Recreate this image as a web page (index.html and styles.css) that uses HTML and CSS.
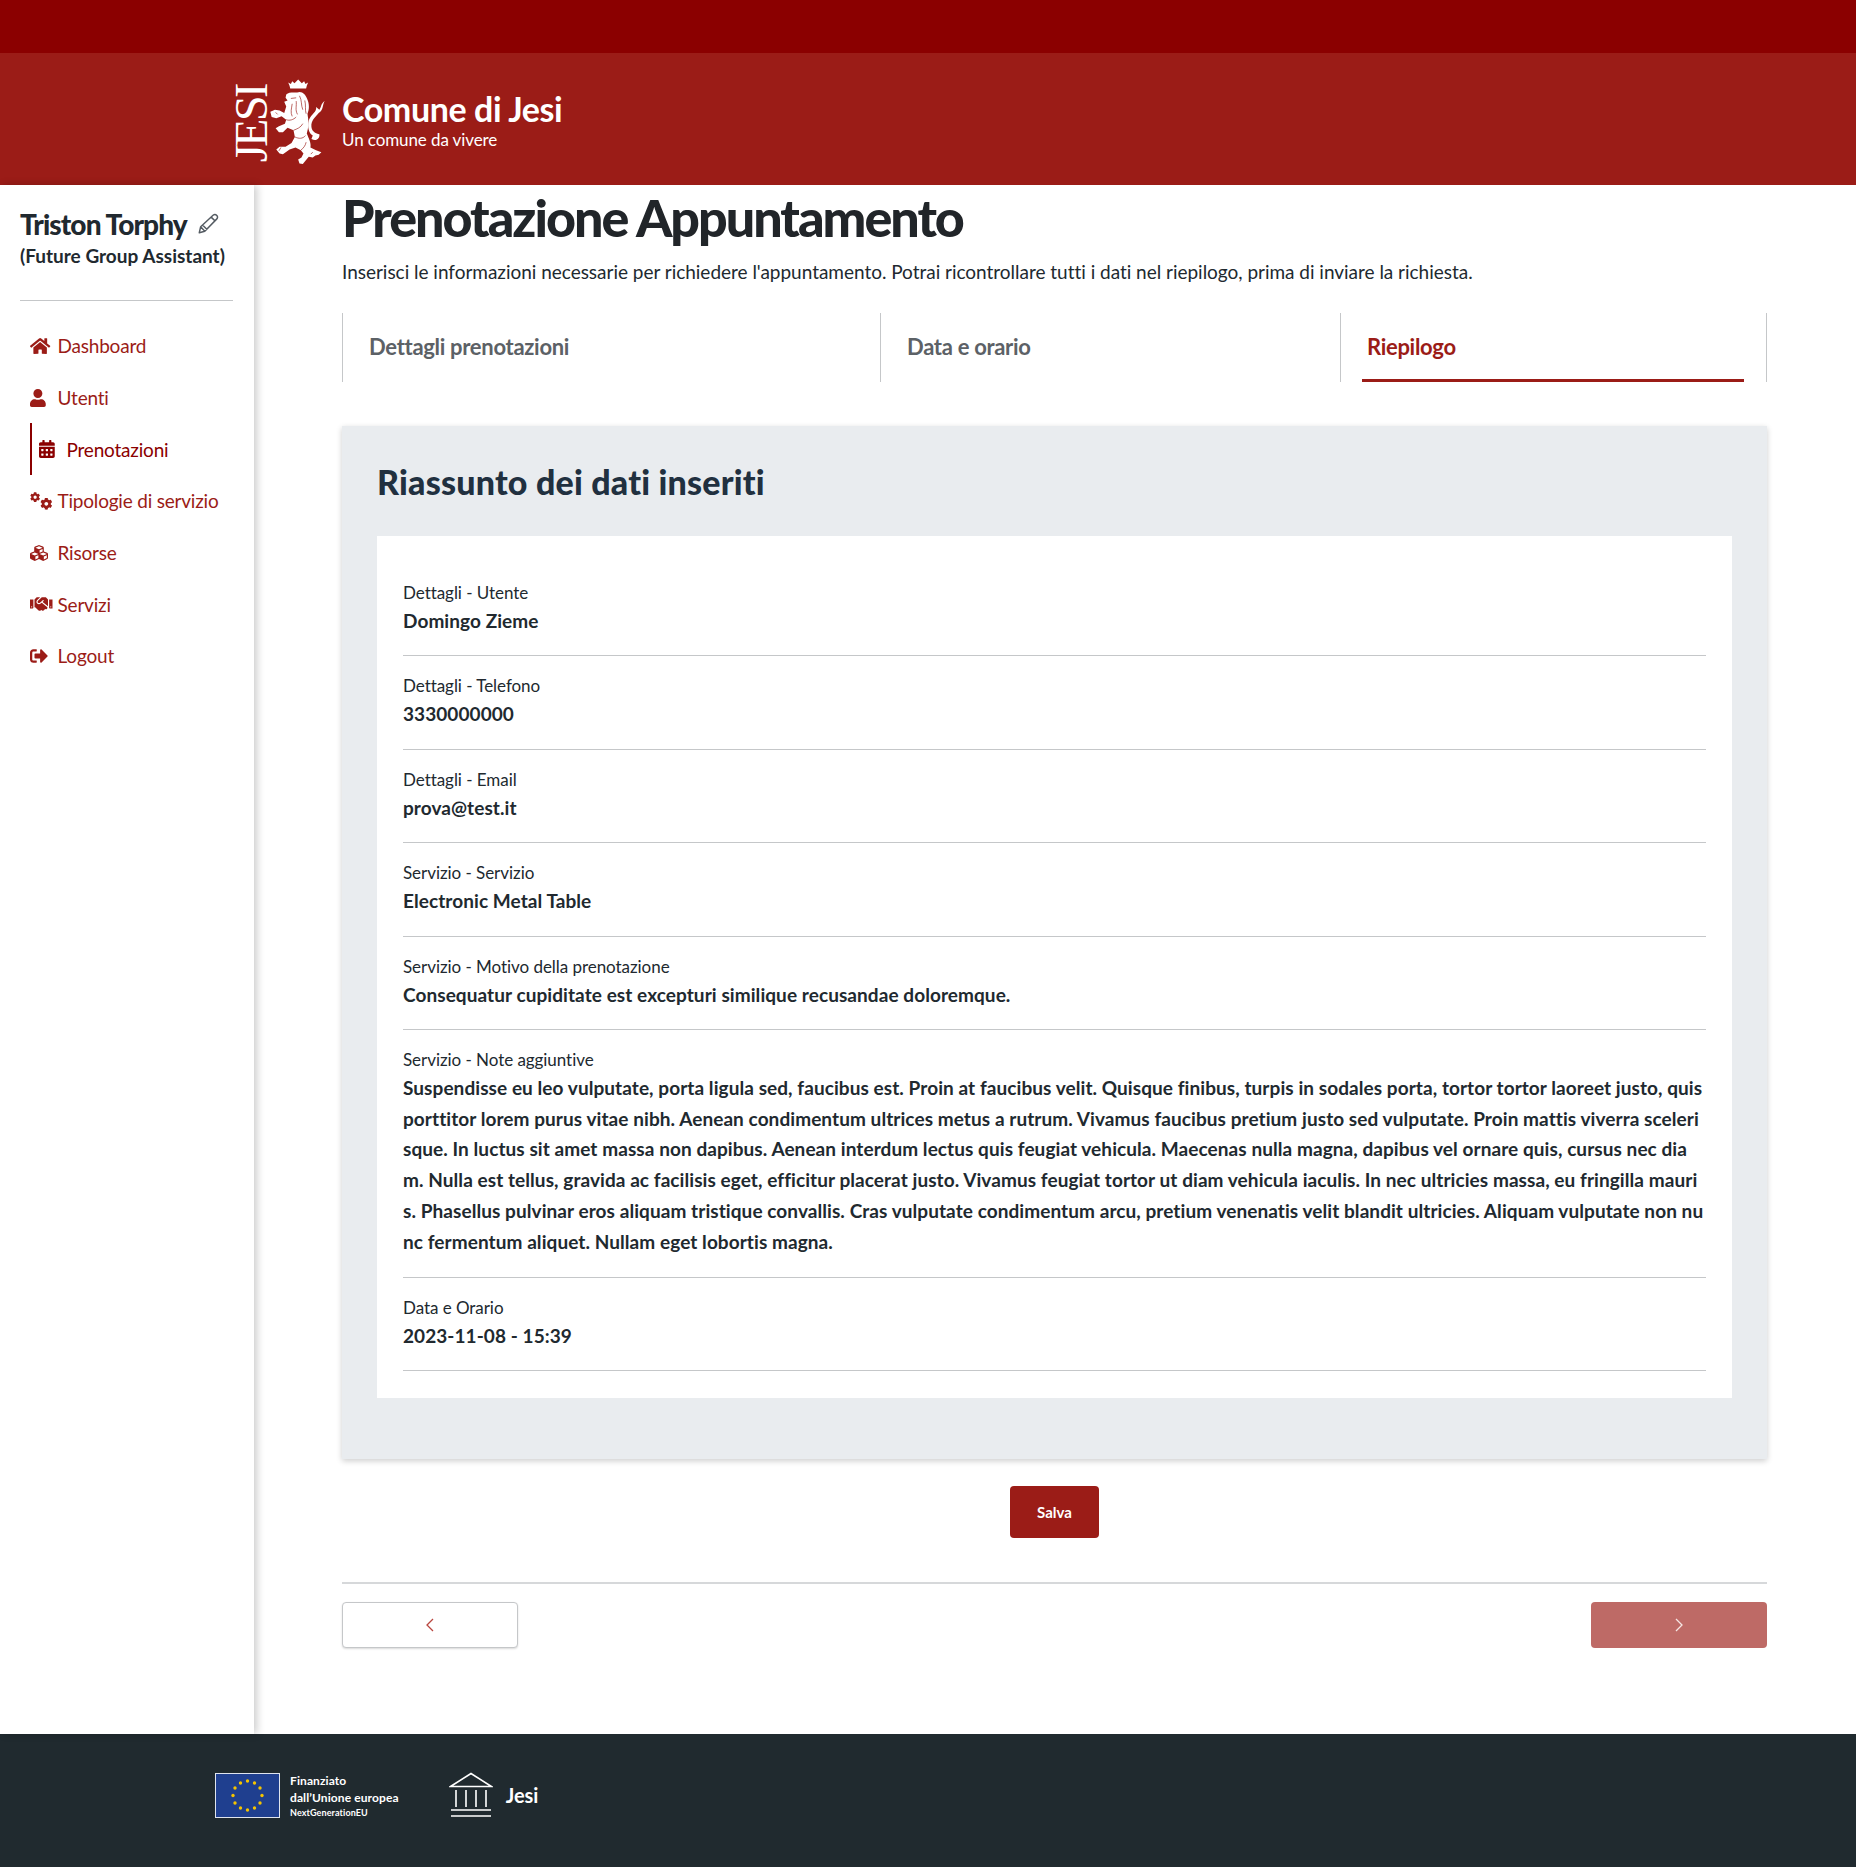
FILE: index.html
```html
<!DOCTYPE html>
<html lang="it">
<head>
  <meta charset="UTF-8" />
  <title>Prenotazione Appuntamento | Comune di Jesi</title>
  <link rel="stylesheet" href="styles.css">
</head>
<body>
  <div class="topbar"></div>

  <header class="header">
    <div class="logo">
      <span class="logo-word">JESI</span>
      <svg class="lion" viewBox="130 20 175 270" aria-hidden="true">
        <!-- crown -->
        <path fill="#fff" d="M192 46 L188 36 L196 40 L200 32 L207 38 L218 27 L229 38 L236 32 L240 40 L248 36 L244 46 L242 54 L194 54 Z"/>
        <!-- rampant lion, hand traced -->
        <path fill="#fff" d="M182 72 C190 64 205 66 215 66 C228 60 240 70 245 85 C252 100 252 118 246 130 C250 150 250 170 244 190 C250 205 258 220 255 232 L272 240 L288 246 L280 254 L270 256 L262 262 L250 260 L240 272 L232 282 L222 280 L218 268 L228 262 L234 250 L226 240 L210 232 L192 238 L172 252 L162 250 L152 238 L162 230 L180 230 L198 218 L208 200 L204 180 L186 172 L172 186 L160 186 L150 174 L160 168 L178 160 L182 148 L168 138 L152 144 L138 140 L134 124 L148 118 L162 120 L176 128 L182 108 L176 94 L186 90 L180 82 Z"/>
        <path fill="#fff" d="M298 92 C290 105 296 118 280 128 C270 140 256 150 258 170 C260 185 272 190 282 192 C284 205 272 215 258 206 L262 196 C250 190 245 170 250 150 C258 130 275 125 272 110 L282 118 C288 112 286 100 298 92 Z"/>
        <path fill="none" stroke="#9b1c17" stroke-width="2" d="M196 84 L212 82 M222 76 C230 90 226 104 232 118 M212 92 C214 106 208 118 216 132 M238 90 C242 104 238 118 242 130 M200 100 C198 114 194 126 200 138 M182 148 C192 152 204 148 212 140 M204 180 C214 176 226 172 232 160 M208 200 C220 206 232 206 240 196 M226 240 C234 234 240 226 242 216 M150 126 L156 132 M166 232 L160 242 M262 246 L256 252"/>
      </svg>
    </div>
    <div class="brand">
      <div class="brand-name">Comune di Jesi</div>
      <div class="brand-tag">Un comune da vivere</div>
    </div>
  </header>

  <div class="layout">
    <aside class="sidebar">
      <div class="user-name">Triston Torphy
        <svg class="pencil" viewBox="0 0 24 24" aria-hidden="true">
          <path fill="none" stroke="#555c63" stroke-width="1.6" stroke-linejoin="round" d="M2.5 21.5 L4 15 L17.5 2.5 C19 1.3 20.5 1.6 21.6 2.8 C22.6 4 22.6 5.5 21.4 6.7 L8.5 20 Z M4 15 L8.5 20 M6 13 L11 18 M15.5 4.5 L20 9"/>
        </svg>
      </div>
      <div class="user-role">(Future Group Assistant)</div>
      <hr class="side-rule">
      <nav class="side-nav">
        <a class="nav-item"><svg class="nav-icon" viewBox="0 0 576 512" preserveAspectRatio="xMinYMid"><path d="M280.37 148.26L96 300.11V464a16 16 0 0 0 16 16l112.06-.29a16 16 0 0 0 15.92-16V368a16 16 0 0 1 16-16h64a16 16 0 0 1 16 16v95.64a16 16 0 0 0 16 16.05L464 480a16 16 0 0 0 16-16V300L295.67 148.26a12.19 12.19 0 0 0-15.3 0zM571.6 251.47L488 182.56V44.05a12 12 0 0 0-12-12h-56a12 12 0 0 0-12 12v72.61L318.47 43a48 48 0 0 0-61 0L4.34 251.47a12 12 0 0 0-1.6 16.9l25.5 31A12 12 0 0 0 45.15 301l235.22-193.74a12.19 12.19 0 0 1 15.3 0L530.9 301a12 12 0 0 0 16.9-1.6l25.5-31a12 12 0 0 0-1.7-16.93z"/></svg>Dashboard</a>
        <a class="nav-item"><svg class="nav-icon" viewBox="0 0 640 512" preserveAspectRatio="xMinYMid"><path d="M224 256c70.7 0 128-57.3 128-128S294.7 0 224 0 96 57.3 96 128s57.3 128 128 128zm89.6 32h-16.7c-22.2 10.2-46.9 16-72.9 16s-50.6-5.8-72.9-16h-16.7C60.2 288 0 348.2 0 422.4V464c0 26.5 21.5 48 48 48h352c26.5 0 48-21.5 48-48v-41.6c0-74.2-60.2-134.4-134.4-134.4z"/></svg>Utenti</a>
        <a class="nav-item active"><svg class="nav-icon" viewBox="0 0 640 512" preserveAspectRatio="xMinYMid"><path d="M0 464c0 26.5 21.5 48 48 48h352c26.5 0 48-21.5 48-48V192H0v272zm320-196c0-6.6 5.4-12 12-12h40c6.6 0 12 5.4 12 12v40c0 6.6-5.4 12-12 12h-40c-6.6 0-12-5.4-12-12v-40zm0 128c0-6.6 5.4-12 12-12h40c6.6 0 12 5.4 12 12v40c0 6.6-5.4 12-12 12h-40c-6.6 0-12-5.4-12-12v-40zM192 268c0-6.6 5.4-12 12-12h40c6.6 0 12 5.4 12 12v40c0 6.6-5.4 12-12 12h-40c-6.6 0-12-5.4-12-12v-40zm0 128c0-6.6 5.4-12 12-12h40c6.6 0 12 5.4 12 12v40c0 6.6-5.4 12-12 12h-40c-6.6 0-12-5.4-12-12v-40zM64 268c0-6.6 5.4-12 12-12h40c6.6 0 12 5.4 12 12v40c0 6.6-5.4 12-12 12H76c-6.6 0-12-5.4-12-12v-40zm0 128c0-6.6 5.4-12 12-12h40c6.6 0 12 5.4 12 12v40c0 6.6-5.4 12-12 12H76c-6.6 0-12-5.4-12-12v-40zM400 64h-48V16c0-8.8-7.2-16-16-16h-32c-8.8 0-16 7.2-16 16v48H160V16c0-8.8-7.2-16-16-16h-32c-8.8 0-16 7.2-16 16v48H48C21.5 64 0 85.5 0 112v48h448v-48c0-26.5-21.5-48-48-48z"/></svg>Prenotazioni</a>
        <a class="nav-item"><svg class="nav-icon" viewBox="0 0 640 512" preserveAspectRatio="xMinYMid">
          <g transform="scale(.57)"><path id="gear" d="M487.4 315.7l-42.6-24.6c4.3-23.2 4.3-47 0-70.2l42.6-24.6c4.9-2.8 7.1-8.6 5.5-14-11.1-35.6-30-67.8-54.7-94.6-3.8-4.1-10-5.1-14.8-2.3L380.8 110c-17.9-15.4-38.5-27.3-60.8-35.1V25.8c0-5.6-3.9-10.5-9.4-11.7-36.7-8.2-74.3-7.8-109.2 0-5.5 1.2-9.4 6.1-9.4 11.7V75c-22.2 7.9-42.8 19.8-60.8 35.1L88.7 85.5c-4.9-2.8-11-1.9-14.8 2.3-24.7 26.7-43.6 58.9-54.7 94.6-1.7 5.4.6 11.2 5.5 14L67.3 221c-4.3 23.2-4.3 47 0 70.2l-42.6 24.6c-4.9 2.8-7.1 8.6-5.5 14 11.1 35.6 30 67.8 54.7 94.6 3.8 4.1 10 5.1 14.8 2.3l42.6-24.6c17.9 15.4 38.5 27.3 60.8 35.1v49.2c0 5.6 3.9 10.5 9.4 11.7 36.7 8.2 74.3 7.8 109.2 0 5.5-1.2 9.4-6.1 9.4-11.7v-49.2c22.2-7.9 42.8-19.8 60.8-35.1l42.6 24.6c4.9 2.8 11 1.9 14.8-2.3 24.7-26.7 43.6-58.9 54.7-94.6 1.5-5.5-.7-11.3-5.6-14.1zM256 336c-44.1 0-80-35.9-80-80s35.9-80 80-80 80 35.9 80 80-35.9 80-80 80z"/></g>
          <g transform="translate(290 162) scale(.68)"><use href="#gear"/></g>
        </svg>Tipologie di servizio</a>
        <a class="nav-item"><svg class="nav-icon" viewBox="0 0 640 512" preserveAspectRatio="xMinYMid"><path d="M488.6 250.2L392 214V105.5c0-15-9.3-28.4-23.4-33.7l-100-37.5c-8.1-3.1-17.1-3.1-25.3 0l-100 37.5c-14.1 5.3-23.4 18.7-23.4 33.7V214l-96.6 36.2C9.3 255.5 0 268.9 0 283.9V394c0 13.6 7.7 26.1 19.9 32.2l100 50c10.1 5.1 22.1 5.1 32.2 0l103.9-52 103.9 52c10.1 5.1 22.1 5.1 32.2 0l100-50c12.2-6.1 19.9-18.6 19.9-32.2V283.9c0-15-9.3-28.4-23.4-33.7zM358 214.8l-85 31.9v-68.2l85-37v73.3zM154 104.1l102-38.2 102 38.2v.6l-102 41.4-102-41.4v-.6zm84 291.1l-85 42.5v-79.1l85-38.8v75.4zm0-112l-102 41.4-102-41.4v-.6l102-38.2 102 38.2v.6zm240 112l-85 42.5v-79.1l85-38.8v75.4zm0-112l-102 41.4-102-41.4v-.6l102-38.2 102 38.2v.6z"/></svg>Risorse</a>
        <a class="nav-item"><svg class="nav-icon" viewBox="0 0 640 512" preserveAspectRatio="xMinYMid"><path d="M434.7 64h-85.9c-8 0-15.7 3-21.6 8.4l-98.3 90c-.1.1-.2.3-.3.4-16.6 15.6-16.3 40.5-2.1 56 12.7 13.9 39.4 17.6 56.1 2.7.1-.1.3-.1.4-.2l79.9-73.2c6.5-5.9 16.7-5.5 22.6 1 6 6.5 5.5 16.6-1 22.6l-26.1 23.9L504 313.8c2.9 2.4 5.5 5 7.9 7.7V128l-54.6-54.6c-5.9-6-14.1-9.4-22.6-9.4zM544 128.2v223.9c0 17.7 14.3 32 32 32h64V128.2h-96zm48 223.9c-8.8 0-16-7.2-16-16s7.2-16 16-16 16 7.2 16 16-7.2 16-16 16zM0 384h64c17.7 0 32-14.3 32-32V128.2H0V384zm48-63.9c8.8 0 16 7.2 16 16s-7.2 16-16 16-16-7.2-16-16c0-8.9 7.2-16 16-16zm435.9 18.6L334.6 217.5l-30 27.5c-29.7 27.1-75.2 24.5-101.7-4.4-26.9-29.4-24.8-74.9 4.4-101.7L289.1 64h-83.8c-8.5 0-16.6 3.4-22.6 9.4L128 128v223.9h18.3l90.5 81.9c27.4 22.3 67.7 18.1 90-9.3l.2-.2 17.9 15.5c15.9 13 39.4 10.5 52.3-5.4l31.4-38.6 5.4 4.4c13.7 11.1 33.9 9.1 45-4.7l9.5-11.7c11.2-13.8 9.1-33.9-4.6-45.1z"/></svg>Servizi</a>
        <a class="nav-item"><svg class="nav-icon" viewBox="0 0 640 512" preserveAspectRatio="xMinYMid"><path d="M497 273L329 441c-15 15-41 4.5-41-17v-96H152c-13.3 0-24-10.7-24-24v-96c0-13.3 10.7-24 24-24h136V88c0-21.4 25.9-32 41-17l168 168c9.3 9.4 9.3 24.6 0 34zM192 436v-40c0-6.6-5.4-12-12-12H96c-17.7 0-32-14.3-32-32V160c0-17.7 14.3-32 32-32h84c6.6 0 12-5.4 12-12V76c0-6.6-5.4-12-12-12H96c-53 0-96 43-96 96v192c0 53 43 96 96 96h84c6.6 0 12-5.4 12-12z"/></svg>Logout</a>
      </nav>
    </aside>

    <main class="content">
      <h1 class="page-title">Prenotazione Appuntamento</h1>
      <p class="page-intro">Inserisci le informazioni necessarie per richiedere l'appuntamento. Potrai ricontrollare tutti i dati nel riepilogo, prima di inviare la richiesta.</p>

      <div class="steps">
        <div class="step step-one">Dettagli prenotazioni</div>
        <div class="step step-two">Data e orario</div>
        <div class="step step-three current"><span>Riepilogo</span></div>
      </div>

      <section class="panel">
        <h2 class="panel-title">Riassunto dei dati inseriti</h2>
        <div class="summary">
          <div class="row"><div class="row-label">Dettagli - Utente</div><div class="row-value">Domingo Zieme</div></div>
          <div class="row"><div class="row-label">Dettagli - Telefono</div><div class="row-value">3330000000</div></div>
          <div class="row"><div class="row-label">Dettagli - Email</div><div class="row-value">prova@test.it</div></div>
          <div class="row"><div class="row-label">Servizio - Servizio</div><div class="row-value">Electronic Metal Table</div></div>
          <div class="row"><div class="row-label">Servizio - Motivo della prenotazione</div><div class="row-value">Consequatur cupiditate est excepturi similique recusandae doloremque.</div></div>
          <div class="row row-long"><div class="row-label">Servizio - Note aggiuntive</div><div class="row-value">Suspendisse eu leo vulputate, porta ligula sed, faucibus est. Proin at faucibus velit. Quisque finibus, turpis in sodales porta, tortor tortor laoreet justo, quis<br>porttitor lorem purus vitae nibh. Aenean condimentum ultrices metus a rutrum. Vivamus faucibus pretium justo sed vulputate. Proin mattis viverra sceleri<br>sque. In luctus sit amet massa non dapibus. Aenean interdum lectus quis feugiat vehicula. Maecenas nulla magna, dapibus vel ornare quis, cursus nec dia<br>m. Nulla est tellus, gravida ac facilisis eget, efficitur placerat justo. Vivamus feugiat tortor ut diam vehicula iaculis. In nec ultricies massa, eu fringilla mauri<br>s. Phasellus pulvinar eros aliquam tristique convallis. Cras vulputate condimentum arcu, pretium venenatis velit blandit ultricies. Aliquam vulputate non nu<br>nc fermentum aliquet. Nullam eget lobortis magna.</div></div>
          <div class="row"><div class="row-label">Data e Orario</div><div class="row-value">2023-11-08 - 15:39</div></div>
        </div>
      </section>

      <div class="save-wrap"><button class="btn-save">Salva</button></div>

      <div class="pager">
        <button class="btn-page btn-prev"><svg viewBox="0 0 8 14"><path d="M7 1 L1 7 L7 13"/></svg></button>
        <button class="btn-page btn-next"><svg viewBox="0 0 8 14"><path d="M1 1 L7 7 L1 13"/></svg></button>
      </div>
    </main>
  </div>

  <footer class="footer">
    <div class="eu">
      <svg class="eu-flag" viewBox="0 0 65 45" aria-hidden="true">
        <rect x="0.5" y="0.5" width="64" height="44" fill="#1f3f8f" stroke="#dfe4ee"/>
        <g fill="#f5c400">
          <circle cx="32.5" cy="8" r="1.7"/><circle cx="39.5" cy="10" r="1.7"/><circle cx="45" cy="15" r="1.7"/><circle cx="47" cy="22.5" r="1.7"/><circle cx="45" cy="30" r="1.7"/><circle cx="39.5" cy="35" r="1.7"/><circle cx="32.5" cy="37" r="1.7"/><circle cx="25.5" cy="35" r="1.7"/><circle cx="20" cy="30" r="1.7"/><circle cx="18" cy="22.5" r="1.7"/><circle cx="20" cy="15" r="1.7"/><circle cx="25.5" cy="10" r="1.7"/>
        </g>
      </svg>
      <div class="eu-text">
        <div>Finanziato</div>
        <div>dall’Unione europea</div>
        <div class="eu-next">NextGenerationEU</div>
      </div>
    </div>
    <svg class="temple" viewBox="0 0 44 46" aria-hidden="true">
      <path fill="none" stroke="#fff" stroke-width="1.6" d="M1.5 14.5 L22 1.5 L42.5 14.5 Z"/>
      <path fill="none" stroke="#fff" stroke-width="1.6" d="M7 18 V35 M17 18 V35 M27 18 V35 M37 18 V35 M2 38 H42 M2 44 H42"/>
    </svg>
    <div class="city">Jesi</div>
  </footer>
</body>
</html>
```

FILE: styles.css
```css
* {
  box-sizing: border-box;
}

body {
  font-family: 'Lato', sans-serif;
  color: #21292f;
  background-color: white;
  margin: 0;
}

.topbar {
  height: 53px;
  background-color: #8b0000;
}

.header {
  height: 132px;
  background-color: #9b1c17;
  display: flex;
  align-items: center;
  padding-left: 235px;
  color: white;
}

.logo {
  display: flex;
  align-items: center;
  width: 107px;
  height: 90px;
  margin-top: 6px;
}

.logo-word {
  font-family: 'Liberation Serif', serif;
  font-size: 46px;
  line-height: 34px;
  writing-mode: vertical-rl;
  transform: rotate(180deg);
  letter-spacing: -2.4px;
  width: 34px;
  margin-top: 4px;
}

.lion {
  width: 58px;
  height: 90px;
  flex-shrink: 0;
}

.brand {
  margin-top: 2px;
}

.brand-name {
  font-size: 34px;
  font-weight: 700;
  line-height: 40px;
  letter-spacing: -0.4px;
}

.brand-tag {
  font-size: 17px;
  line-height: 22px;
  letter-spacing: -0.1px;
}

.layout {
  display: flex;
  height: 1549px;
}

.sidebar {
  width: 254px;
  flex-shrink: 0;
  padding: 22px 20px 0;
  box-shadow: 3px 0 8px rgba(0, 0, 0, 0.2);
}

.user-name {
  font-size: 28px;
  font-weight: 900;
  line-height: 34px;
  letter-spacing: -0.9px;
  display: flex;
  align-items: center;
  gap: 10px;
}

.pencil {
  width: 22px;
  height: 22px;
}

.user-role {
  font-size: 19px;
  font-weight: 700;
  line-height: 24px;
  margin-top: 3px;
  white-space: nowrap;
}

.side-rule {
  border: none;
  border-top: 1px solid #c5c7c9;
  margin: 32px 0 19px;
  width: 213px;
}

.side-nav {
  display: flex;
  flex-direction: column;
  margin-left: 10px;
}

.nav-item {
  height: 51.7px;
  display: flex;
  align-items: center;
  font-size: 19px;
  letter-spacing: -0.2px;
  color: #9b1c17;
}

.nav-icon {
  height: 18px;
  width: 22.5px;
  margin-right: 5px;
  fill: #9b1c17;
  flex-shrink: 0;
}

.nav-item.active {
  color: #8b0000;
  border-left: 2px solid #8b0000;
  padding-left: 7px;
}

.nav-item.active .nav-icon {
  fill: #8b0000;
}

.content {
  width: 1425px;
  margin-left: 88px;
}

.page-title {
  font-size: 52px;
  font-weight: 900;
  line-height: 62px;
  letter-spacing: -2px;
  margin: 1px 0 0;
  color: #212529;
}

.page-intro {
  font-size: 19px;
  line-height: 27px;
  margin: 10px 0 28px;
  letter-spacing: -0.02px;
}

.steps {
  display: flex;
  height: 69px;
  border-right: 1px solid #c5c7c9;
  font-size: 22px;
  font-weight: 700;
  letter-spacing: -0.3px;
  color: #5c6166;
}

.step {
  border-left: 1px solid #c5c7c9;
  padding: 20px 0 0 26px;
}

.step-one {
  width: 538px;
}

.step-two {
  width: 460px;
}

.step-three {
  flex: 1;
  padding: 0 22px 0 21px;
  color: #9b1c17;
}

.step-three span {
  display: block;
  height: 69px;
  padding: 20px 0 0 5px;
  border-bottom: 3px solid #9b1c17;
}

.panel {
  margin-top: 44px;
  height: 1033px;
  background-color: #e9ecef;
  padding: 0 35px;
  box-shadow: 0 2px 6px rgba(0, 0, 0, 0.2);
}

.panel-title {
  font-size: 34px;
  font-weight: 900;
  line-height: 40px;
  letter-spacing: 0.2px;
  margin: 0;
  padding: 36px 0 34px;
  color: #21303f;
}

.summary {
  background: white;
  padding: 36px 26px 27px;
}

.row {
  height: 93.5px;
  border-bottom: 1px solid #c5c7c9;
  padding-top: 17px;
}

.row:first-child {
  height: 84px;
  padding-top: 8px;
}

.row-long {
  height: 247.5px;
}

.row-label {
  font-size: 17px;
  line-height: 26px;
  letter-spacing: -0.05px;
}

.row-value {
  font-size: 19px;
  font-weight: 700;
  line-height: 30.7px;
  letter-spacing: 0.07px;
  white-space: nowrap;
}

.save-wrap {
  text-align: center;
  margin-top: 27px;
}

.btn-save {
  width: 89px;
  height: 52px;
  background-color: #9b1c17;
  color: white;
  font-family: inherit;
  font-size: 15px;
  font-weight: 700;
  border: none;
  border-radius: 4px;
}

.pager {
  margin-top: 44px;
  border-top: 2px solid #d6d8da;
  padding-top: 18px;
  display: flex;
  justify-content: space-between;
}

.btn-page {
  width: 176px;
  height: 46px;
  border-radius: 4px;
  display: flex;
  align-items: center;
  justify-content: center;
}

.btn-page svg {
  width: 8px;
  height: 14px;
  fill: none;
  stroke-width: 1.3;
}

.btn-prev {
  background: white;
  border: 1px solid #c5c7c9;
  box-shadow: 0 1px 2px rgba(0, 0, 0, 0.15);
}

.btn-prev svg {
  stroke: #b9463f;
}

.btn-next {
  background-color: #be6a66;
  border: none;
}

.btn-next svg {
  stroke: #f6e6e4;
}

.footer {
  height: 133px;
  background-color: #202a2f;
  display: flex;
  align-items: center;
  padding: 0 0 11px 215px;
  color: white;
}

.eu {
  display: flex;
  align-items: center;
  gap: 10px;
  margin-right: 50px;
}

.eu-flag {
  width: 65px;
  height: 45px;
}

.eu-text {
  font-size: 12px;
  font-weight: 700;
  line-height: 17px;
  letter-spacing: 0.1px;
}

.eu-next {
  font-size: 9px;
  line-height: 13px;
}

.temple {
  width: 44px;
  height: 46px;
}

.city {
  font-size: 20px;
  font-weight: 700;
  margin-left: 13px;
}
```
